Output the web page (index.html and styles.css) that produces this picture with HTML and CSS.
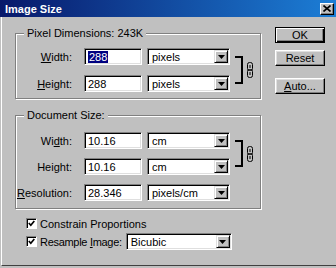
FILE: index.html
```html
<!DOCTYPE html>
<html lang="en">

<head>
    <meta charset="UTF-8">
    <title>Image Size</title>
    <link rel="stylesheet" href="styles.css">
</head>

<body>
    <div class="window">
        <!-- Title bar -->
        <div class="titlebar">
            <span class="title">Image Size</span>
            <span class="close">
                <svg width="8" height="7" viewBox="0 0 8 7"><path d="M0.5 0.5 L7.5 6.5 M7.5 0.5 L0.5 6.5" stroke="#000" stroke-width="1.6"/></svg>
            </span>
        </div>

        <div class="dialog-body">
            <div class="main">
                <!-- Pixel Dimensions -->
                <div class="group">
                    <div class="group-title">Pixel Dimensions: 243K</div>
                    <div class="fields fields-pixels">
                        <label class="lbl"><u>W</u>idth:</label>
                        <div class="input"><span class="selected">288</span></div>
                        <div class="select"><span>pixels</span><span class="drop"><svg width="7" height="4" viewBox="0 0 7 4"><path d="M0 0 H7 L3.5 4 Z" fill="#000"/></svg></span></div>
                        <div class="link">
                            <div class="bracket"></div>
                            <svg class="chain" width="6" height="16" viewBox="0 0 6 16"><rect x="0.5" y="0.5" width="5" height="8" rx="2" fill="none" stroke="#000"/><rect x="0.5" y="7.5" width="5" height="8" rx="2" fill="none" stroke="#000"/><path d="M3 3 V6 M3 10 V13" stroke="#000"/></svg>
                        </div>
                        <label class="lbl"><u>H</u>eight:</label>
                        <div class="input">288</div>
                        <div class="select"><span>pixels</span><span class="drop"><svg width="7" height="4" viewBox="0 0 7 4"><path d="M0 0 H7 L3.5 4 Z" fill="#000"/></svg></span></div>
                    </div>
                </div>

                <!-- Document Size -->
                <div class="group group-doc">
                    <div class="group-title">Document Size:</div>
                    <div class="fields fields-doc">
                        <label class="lbl">Wi<u>d</u>th:</label>
                        <div class="input">10.16</div>
                        <div class="select"><span>cm</span><span class="drop"><svg width="7" height="4" viewBox="0 0 7 4"><path d="M0 0 H7 L3.5 4 Z" fill="#000"/></svg></span></div>
                        <div class="link">
                            <div class="bracket"></div>
                            <svg class="chain" width="6" height="16" viewBox="0 0 6 16"><rect x="0.5" y="0.5" width="5" height="8" rx="2" fill="none" stroke="#000"/><rect x="0.5" y="7.5" width="5" height="8" rx="2" fill="none" stroke="#000"/><path d="M3 3 V6 M3 10 V13" stroke="#000"/></svg>
                        </div>
                        <label class="lbl">Hei<u>g</u>ht:</label>
                        <div class="input">10.16</div>
                        <div class="select"><span>cm</span><span class="drop"><svg width="7" height="4" viewBox="0 0 7 4"><path d="M0 0 H7 L3.5 4 Z" fill="#000"/></svg></span></div>
                        <label class="lbl"><u>R</u>esolution:</label>
                        <div class="input">28.346</div>
                        <div class="select"><span>pixels/cm</span><span class="drop"><svg width="7" height="4" viewBox="0 0 7 4"><path d="M0 0 H7 L3.5 4 Z" fill="#000"/></svg></span></div>
                    </div>
                </div>

                <!-- Options -->
                <div class="checks">
                    <div class="check-row">
                        <span class="checkbox"><svg width="7" height="7" viewBox="0 0 7 7"><path d="M0.8 3 L2.8 5.2 L6.3 1" fill="none" stroke="#000" stroke-width="1.7"/></svg></span>
                        <span>Constrain Proportions</span>
                    </div>
                    <div class="check-row">
                        <span class="checkbox"><svg width="7" height="7" viewBox="0 0 7 7"><path d="M0.8 3 L2.8 5.2 L6.3 1" fill="none" stroke="#000" stroke-width="1.7"/></svg></span>
                        <span class="check-label">Resample <u>I</u>mage:</span>
                        <div class="select select-wide"><span>Bicubic</span><span class="drop"><svg width="7" height="4" viewBox="0 0 7 4"><path d="M0 0 H7 L3.5 4 Z" fill="#000"/></svg></span></div>
                    </div>
                </div>
            </div>

            <!-- Buttons -->
            <div class="buttons">
                <div class="btn btn-default">OK</div>
                <div class="btn btn-reset">Reset</div>
                <div class="btn btn-auto"><span><u>A</u>uto...</span></div>
            </div>
        </div>
    </div>
</body>

</html>
```

FILE: styles.css
```css
body {
    margin: 0;
    font-family: "Liberation Sans", Arial, sans-serif;
    font-size: 11px;
    color: #000;
}

.window {
    width: 336px;
    height: 268px;
    background-color: #c0c0c0;
    display: flex;
    flex-direction: column;
}

.titlebar {
    height: 17px;
    flex-shrink: 0;
    display: flex;
    align-items: center;
    justify-content: space-between;
    padding: 0 2px 0 5px;
    background: linear-gradient(to right, #08186a, #1c7ed6);
}

.title {
    color: #fff;
    font-weight: bold;
    font-size: 11px;
}

.close {
    width: 14px;
    height: 12px;
    box-sizing: border-box;
    display: flex;
    align-items: center;
    justify-content: center;
    background-color: #c0c0c0;
    border: 1px solid;
    border-color: #fff #000 #000 #fff;
    box-shadow: inset -1px -1px 0 #808080;
}

.dialog-body {
    flex: 1;
    display: flex;
    margin: 0 0 2px 1px;
    border-left: 1px solid #fff;
    border-bottom: 1px solid #404040;
}

.main {
    width: 246px;
    padding: 16px 0 0 13px;
}

.group {
    border: 1px solid #808080;
    box-shadow: 1px 1px 0 #fff, inset 1px 1px 0 #fff;
    padding-bottom: 6px;
}

.group-doc {
    margin-top: 16px;
    padding-bottom: 7px;
}

.group-title {
    width: fit-content;
    margin: -7px 0 0 8px;
    padding: 0 3px;
    line-height: 13px;
    background-color: #c0c0c0;
}

.fields {
    display: grid;
    grid-template-columns: 68px 63px 88px 1fr;
    grid-auto-rows: 17px;
    row-gap: 10px;
    margin-top: 8px;
}

.fields-doc {
    row-gap: 9px;
    margin-top: 10px;
}

.lbl {
    display: flex;
    align-items: center;
    justify-content: flex-end;
    padding-right: 12px;
}

.input {
    width: 58px;
    box-sizing: border-box;
    display: flex;
    align-items: center;
    padding-left: 3px;
    background-color: #fff;
    border: 1px solid;
    border-color: #808080 #fff #fff #808080;
    box-shadow: inset 1px 1px 0 #000, inset -1px -1px 0 #dfdfdf;
}

.selected {
    background-color: #000080;
    color: #fff;
    padding: 0 1px;
    line-height: 12px;
}

.select {
    width: 83px;
    height: 17px;
    box-sizing: border-box;
    display: flex;
    align-items: center;
    justify-content: space-between;
    padding: 1px 1px 1px 4px;
    background-color: #fff;
    border: 1px solid;
    border-color: #808080 #fff #fff #808080;
    box-shadow: inset 1px 1px 0 #000, inset -1px -1px 0 #dfdfdf;
}

.drop {
    width: 14px;
    height: 13px;
    box-sizing: border-box;
    display: flex;
    align-items: center;
    justify-content: center;
    background-color: #c0c0c0;
    border: 1px solid;
    border-color: #dfdfdf #000 #000 #dfdfdf;
    box-shadow: inset 1px 1px 0 #fff, inset -1px -1px 0 #808080;
}

.link {
    grid-column: 4;
    grid-row: 1 / 3;
    display: flex;
    align-items: center;
    gap: 4px;
    margin: 8px 0;
}

.bracket {
    width: 6px;
    align-self: stretch;
    border: 2px solid #000;
    border-left: none;
}

.checks {
    display: flex;
    flex-direction: column;
    gap: 3px;
    margin-top: 8px;
    padding-left: 11px;
}

.check-row {
    display: flex;
    align-items: center;
    min-height: 13px;
}

.checkbox {
    width: 11px;
    height: 11px;
    flex-shrink: 0;
    box-sizing: border-box;
    display: flex;
    align-items: center;
    justify-content: center;
    margin-right: 3px;
    background-color: #fff;
    border: 1px solid;
    border-color: #808080 #fff #fff #808080;
    box-shadow: inset 1px 1px 0 #000;
}

.check-label {
    white-space: nowrap;
    letter-spacing: -0.3px;
    margin-right: 4px;
}

.select-wide {
    width: 106px;
}

.buttons {
    width: 50px;
    margin-left: 14px;
    padding-top: 10px;
    display: flex;
    flex-direction: column;
}

.btn {
    height: 16px;
    box-sizing: border-box;
    display: flex;
    align-items: center;
    justify-content: center;
    border: 1px solid;
    border-color: #fff #000 #000 #fff;
    box-shadow: inset -1px -1px 0 #808080, inset 1px 1px 0 #dfdfdf;
}

.btn-default {
    border-color: #000;
    box-shadow: inset 1px 1px 0 #fff, inset -1px -1px 0 #000, inset -2px -2px 0 #808080;
}

.btn-reset {
    margin-top: 7px;
}

.btn-auto {
    margin-top: 12px;
}
```
